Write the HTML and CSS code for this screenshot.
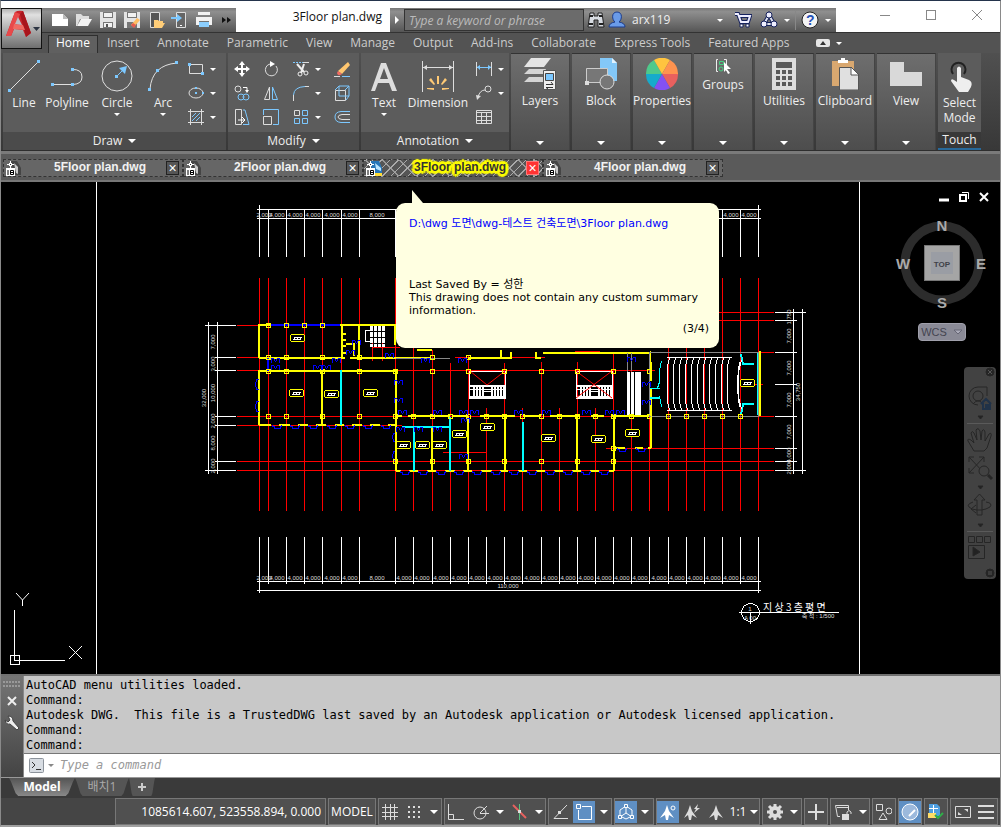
FILE: index.html
```html
<!DOCTYPE html>
<html lang="en">
<head>
<meta charset="utf-8">
<title>3Floor plan.dwg</title>
<link rel="stylesheet" href="styles.css">
</head>
<body>
<div class="app">
<header class="titlebar">
  <button class="app-button" aria-label="Application menu">
    <svg width="39" height="39" viewBox="0 0 39 39"><path d="M4 27L13 3Q16 1 21 2L29 24L24 28L21 21L12 20L9 27Z" fill="#c8242b"/><path d="M13 3L18 5L9 27L4 27Z" fill="#e8494a"/><path d="M18 5L21 2L29 24L24 28Z" fill="#a8151c"/><path d="M12 15L21 16L23 21L11 20Z" fill="#f06a62"/><path d="M16 8L20 16L13 15Z" fill="#b9bcc4"/><path d="M31 18H38L34.500 22Z" fill="#2c3442"/></svg>
  </button>
  <div class="qat">
    <button aria-label="New"><svg width="18" height="18"><path d="M1 3H12L17 8V15H1Z" fill="#fff"/><path d="M12 3V8H17Z" fill="#bbb"/></svg></button>
    <button aria-label="Open"><svg width="18" height="18"><path d="M1 3H6L8 5H14V8H5L2 15H1Z" fill="#ddd"/><path d="M6 8H17L13 15H2Z" fill="#f4f4f4"/></svg></button>
    <button aria-label="Save"><svg width="18" height="18"><path d="M1 1H17V17H1Z" fill="#e4e4e4"/><path d="M4 1H14V7H4ZM4 11H14V17H4Z" fill="#777"/><path d="M5 2H13V6H5ZM5 12H13V16H5Z" fill="#f2f2f2"/><path d="M7 13H9V16H7Z" fill="#555"/></svg></button>
    <button aria-label="Save As"><svg width="18" height="18"><path d="M1 1H17V17H1Z" fill="#e4e4e4"/><path d="M4 1H14V7H4ZM4 11H14V17H4Z" fill="#777"/><path d="M5 2H13V6H5Z" fill="#f2f2f2"/><path d="M8 14L14 7L17 9L11 16Z" fill="#ffbd63"/><path d="M8 14L10 12L13 14L11 17Z" fill="#e75a4d"/></svg></button>
    <button aria-label="Open from mobile"><svg width="18" height="18"><path d="M3.500 1.500H12.500V16.500H3.500Z" fill="#555" stroke="#ddd"/><path d="M7 9H11L12 10H16V12H18L15 17H7Z" fill="#ffcd78"/></svg></button>
    <button aria-label="Save to mobile"><svg width="18" height="18"><path d="M5.500 1.500H14.500V16.500H5.500Z" fill="#666" stroke="#ddd"/><path d="M0 6H6V3L11 7L6 11V8H0Z" fill="#7cc8ff"/><path d="M9 14.500H11" stroke="#fff"/></svg></button>
    <button aria-label="Plot"><svg width="18" height="18"><path d="M3 1H15V4H3ZM1 6H17V14H14V10H4V14H1Z" fill="#f2f2f2"/><path d="M4 11H14V16H4Z" fill="#8ccfff"/></svg></button>
    <button class="narrow" aria-label="More"><svg width="10" height="8"><path d="M1 1L5 4L1 7ZM6 1L10 4L6 7Z" fill="#111"/></svg></button>
  </div>
  <h1 class="doc-title">3Floor plan.dwg</h1>
  <div class="info">
    <button class="slot-14" aria-label="Collapse search"><svg width="6" height="8"><path d="M1 0L5 4L1 8Z" fill="#fff"/></svg></button>
    <input class="search" type="text" aria-label="Search" placeholder="Type a keyword or phrase">
    <button class="slot-24" aria-label="Search"><svg width="18" height="18"><path d="M3 2H7V5H11V2H15L17 16H11V9H7V16H1Z" fill="#d8dce2" stroke="#222"/><path d="M3 5H6M12 5H15M2 13H6M12 13H16" stroke="#222" stroke-width="2"/></svg></button>
    <button class="user"><svg width="18" height="18"><path d="M9 1C15 1 14 9 11 11Q17 12 17 16H1Q1 12 7 11C4 9 3 1 9 1Z" fill="#6a9be8" stroke="#1c3c8c"/></svg>arx119<i class="caret end"></i></button>
    <button class="slot-24" aria-label="Store"><svg width="18" height="18"><path d="M1 3H4L7 11H14L16 5H5" stroke="#16225c" stroke-width="4" fill="none"/><path d="M1 3H4L7 11H14L16 5H5" stroke="#eef" stroke-width="2" fill="none"/><path d="M6 13h3v3h-3zM12 13h3v3h-3z" fill="#fff" stroke="#16225c"/></svg></button>
    <button class="slot-40" aria-label="Autodesk app store"><svg width="18" height="18"><path d="M9 4L4 13H14Z" stroke="#16225c" stroke-width="4" fill="none"/><path d="M9 4L4 13H14Z" stroke="#dfe3ee" stroke-width="2" fill="none"/><g fill="#eef" stroke="#16225c"><circle cx="9" cy="4" r="3"/><circle cx="4" cy="13" r="3"/><circle cx="14" cy="13" r="3"/></g></svg><i class="caret"></i></button>
    <span class="rule"></span>
    <button class="slot-40" aria-label="Help"><svg width="18" height="18"><circle cx="9" cy="9" r="8" fill="#f4f4f4" stroke="#222"/><text class="question" x="5" y="14">?</text></svg><i class="caret"></i></button>
  </div>
  <div class="window-controls">
    <button aria-label="Minimize"><svg width="12" height="12"><path d="M1 6.500H11" stroke="#888"/></svg></button>
    <button aria-label="Maximize"><svg width="12" height="12"><rect x="1.500" y="1.500" width="9" height="9" fill="none" stroke="#888"/></svg></button>
    <button aria-label="Close"><svg width="12" height="12"><path d="M1 1L11 11M11 1L1 11" stroke="#888"/></svg></button>
  </div>
</header>

<nav class="menu">
  <button class="current">Home</button><button>Insert</button><button>Annotate</button><button>Parametric</button><button>View</button><button>Manage</button><button>Output</button><button>Add-ins</button><button>Collaborate</button><button>Express Tools</button><button>Featured Apps</button>
  <button class="minimize" aria-label="Minimize ribbon"><svg width="14" height="8"><rect width="14" height="8" rx="2" fill="#e6e6e6"/><path d="M4 6L7 2L10 6Z" fill="#333"/></svg><i class="caret"></i></button>
</nav>

<div class="ribbon">
  <section class="panel draw">
    <div class="tools">
      <button class="big"><svg width="32" height="32"><path d="M2 30L30 2" stroke="#e0e0e0"/><path d="M0 29h3v3h-3zM29 0h3v3h-3z" fill="#7cc8ff"/></svg>Line</button>
      <button class="big"><svg width="32" height="32"><path d="M1 24.500H21M21 9.500Q31 9 31 17Q31 24 22 24.500" stroke="#e0e0e0" fill="none"/><path d="M0 23h3v3h-3zM20 23h3v3h-3zM20 8h3v3h-3z" fill="#7cc8ff"/></svg>Polyline</button>
      <button class="big"><svg width="32" height="32"><circle cx="16" cy="16" r="15" stroke="#e0e0e0" fill="none"/><path d="M16 16L23 9" stroke="#7cc8ff"/><path d="M14 15h3v3h-3zM18 8L26 6L24 14Z" fill="#7cc8ff"/></svg>Circle<i class="caret"></i></button>
      <button class="big"><svg width="32" height="32"><path d="M3 29Q5 5 30 3" stroke="#e0e0e0" fill="none"/><path d="M1 28h3v3h-3zM9 9h3v3h-3zM28 1h3v3h-3z" fill="#7cc8ff"/></svg>Arc<i class="caret"></i></button>
      <div class="small-tools one">
        <button aria-label="Rectangle"><svg width="16" height="16"><path d="M1.500 3.500H14.500V12.500H1.500Z" stroke="#ddd" fill="none"/><path d="M0 2h3v3h-3zM13 11h3v3h-3z" fill="#7cc8ff"/></svg><i class="caret"></i></button>
        <button aria-label="Ellipse"><svg width="16" height="16"><ellipse cx="8" cy="8" rx="7" ry="5" stroke="#ddd" fill="none"/><path d="M7 7h2v2h-2zM7 2h2v2h-2zM14 7h2v2h-2z" fill="#7cc8ff"/></svg><i class="caret"></i></button>
        <button aria-label="Hatch"><svg width="16" height="16"><path d="M2.500 0V16M13.500 0V16M0 2.500H16M0 13.500H16" stroke="#ddd"/><path d="M4 8L8 4M4 12L12 4M8 12L12 8" stroke="#7cc8ff"/></svg><i class="caret"></i></button>
      </div>
    </div>
    <button class="caption">Draw <i class="caret wide"></i></button>
  </section>
  <section class="panel modify">
    <div class="small-tools four">
      <button aria-label="Move"><svg width="16" height="16"><path d="M8 2V14M2 8H14" stroke="#fff" stroke-width="2"/><path d="M8 0L11 4H5ZM8 16L11 12H5ZM0 8L4 5V11ZM16 8L12 5V11Z" fill="#fff"/></svg></button>
      <button aria-label="Rotate"><svg width="16" height="16"><path d="M13 5A6 6 0 1 1 7 3" stroke="#ddd" fill="none"/><path d="M7 0L12 3L7 6Z" fill="#fff"/></svg></button>
      <button aria-label="Trim"><svg width="16" height="16"><path d="M0 1.500H10" stroke="#7cc8ff" stroke-dasharray="2 1"/><path d="M10 1.500H16" stroke="#ddd"/><path d="M4 3L11 11M11 3L8 12" stroke="#eee" stroke-width="2"/><circle cx="7" cy="13" r="2" stroke="#eee" fill="none"/><circle cx="13" cy="12" r="2" stroke="#eee" fill="none"/></svg><i class="caret"></i></button>
      <button aria-label="Erase"><svg width="16" height="16"><path d="M4 10L14 1L16 4L8 13Z" fill="#ffc66f"/><path d="M4 10L8 13Q4 16 3 12Z" fill="#f36b63"/><path d="M0 15.500H6" stroke="#ddd"/><path d="M8 15.500H16" stroke="#7cc8ff"/></svg></button>
      <button aria-label="Copy"><svg width="16" height="16"><circle cx="4" cy="4" r="3" stroke="#ddd" fill="none"/><path d="M9 2.500H13V6" stroke="#fff" fill="none"/><path d="M11 5H15L13 8Z" fill="#fff"/><circle cx="7" cy="12" r="3" stroke="#7cc8ff" fill="none"/><circle cx="12" cy="12" r="3" stroke="#7cc8ff" fill="none"/></svg></button>
      <button aria-label="Mirror"><svg width="16" height="16"><path d="M6.500 2V14.500H1.500Z" stroke="#ddd" fill="none"/><path d="M9.500 2V14.500H14.500Z" stroke="#7cc8ff" fill="none"/></svg></button>
      <button aria-label="Fillet"><svg width="16" height="16"><path d="M.500 10V16M12 1.500H16" stroke="#ddd"/><path d="M.500 10Q1 2 12 1.500" stroke="#7cc8ff" fill="none"/></svg><i class="caret"></i></button>
      <button aria-label="Explode"><svg width="16" height="16"><path d="M1.500 5.500H11.500V15.500H1.500Z" stroke="#ddd" fill="none"/><path d="M1 5L5 1H15V11L12 15M11 5L15 1M5 1V11H15" stroke="#7cc8ff" fill="none"/></svg></button>
      <button aria-label="Stretch"><svg width="16" height="16"><path d="M1.500 .500H7.500V15.500H1.500Z" stroke="#ddd" fill="none"/><path d="M9 1H11L15 15.500H9" stroke="#7cc8ff" fill="none"/><path d="M4 11H11M8 8L11 11L8 14" stroke="#fff" fill="none"/></svg></button>
      <button aria-label="Scale"><svg width="16" height="16"><path d="M.500 6V.500H15.500V15.500H10" stroke="#7cc8ff" fill="none"/><path d="M.500 7.500H8.500V15.500H.500Z" stroke="#ddd" fill="none"/></svg></button>
      <button aria-label="Array"><svg width="16" height="16"><path d="M1.500 1.500h5v5h-5z" stroke="#ddd" fill="none"/><path d="M9.500 1.500h5v5h-5zM1.500 9.500h5v5h-5zM9.500 9.500h5v5h-5z" stroke="#7cc8ff" fill="none"/></svg><i class="caret"></i></button>
      <button aria-label="Offset"><svg width="16" height="16"><path d="M16 2.500H7Q1 3 1 8Q1 13 7 13.500H16" stroke="#7cc8ff" fill="none"/><path d="M16 5.500H8Q4 6 4 8Q4 10 8 10.500H16" stroke="#ddd" fill="none"/></svg></button>
    </div>
    <button class="caption">Modify <i class="caret wide"></i></button>
  </section>
  <section class="panel annotation">
    <div class="tools">
      <button class="big"><svg width="32" height="32"><path d="M3 31L13 3H18L29 31H24L21 23H10L7 31ZM12 19H20L16 8Z" fill="#ddd" fill-rule="evenodd"/></svg>Text<i class="caret"></i></button>
      <button class="big"><svg width="32" height="32"><path d="M.500 1V32M31.500 1V32M1 7.500H31" stroke="#ddd"/><path d="M1 7.500L5 5V10ZM31 7.500L27 5V10Z" fill="#ddd"/><path d="M15 16h2v8h-2zM7 20L9 18L13 24L12 25ZM25 20L23 18L19 24L20 25ZM5 28H12V30L5 29ZM27 28H20V30L27 29Z" fill="#ffca75"/></svg>Dimension</button>
      <div class="small-tools one">
        <button aria-label="Linear"><svg width="16" height="16"><path d="M.500 1V15M15.500 1V15" stroke="#ddd"/><path d="M1 6.500H15" stroke="#7cc8ff"/><path d="M1 6L4 4V9ZM15 6L12 4V9Z" fill="#7cc8ff"/></svg><i class="caret"></i></button>
        <button aria-label="Leader"><svg width="16" height="16"><circle cx="12" cy="4" r="3" stroke="#ddd" fill="none"/><path d="M9 5Q4 5 2 12" stroke="#ddd" fill="none"/><path d="M0 10L5 11L1 15Z" fill="#ddd"/></svg><i class="caret"></i></button>
        <button aria-label="Table"><svg width="16" height="16"><path d="M.500 1.500H15.500V14.500H.500ZM0 3.500H16M0 7.500H16M0 11.500H16M5.500 3V15M10.500 3V15" stroke="#ddd" fill="none"/></svg></button>
      </div>
    </div>
    <button class="caption">Annotation <i class="caret wide"></i></button>
  </section>
  <button class="folded"><svg width="32" height="32"><path d="M7 0H27L20 9H0Z" fill="#e4e4e4"/><path d="M5 11H22L20 16H0ZM5 19H19V24H0Z" fill="#d4d4d4"/><path d="M19.500 12.500H31.500V31.500H19.500Z" fill="#eee" stroke="#555"/><path d="M21.500 15.500H29.500V22.500H21.500Z" fill="#7cc8ff" stroke="#444"/><path d="M22 26.500H29M22 29.500H29M27 24L29 26.500M24 31L22 29.500" stroke="#333"/></svg>Layers<i class="caret wide"></i></button>
  <button class="folded"><svg width="32" height="32"><path d="M15 0H27L32 5V23H15Z" fill="#83c8f8"/><path d="M27 0V5H32Z" fill="#e2f3ff"/><path d="M1.500 10.500H22.500V24.500H1.500Z" fill="#777" stroke="#ccc"/><path d="M0 23h4v4h-4z" fill="#ddd"/><circle cx="22" cy="24" r="7" fill="#777" stroke="#ddd"/></svg>Block<i class="caret wide"></i></button>
  <button class="folded"><svg width="32" height="32"><path d="M16 16L0 16A16 16 0 0 1 8 2Z" fill="#4fc98b"/><path d="M16 16L8 2A16 16 0 0 1 24 2Z" fill="#ffc43f"/><path d="M16 16L24 2A16 16 0 0 1 32 16Z" fill="#ff934f"/><path d="M16 16H32A16 16 0 0 1 24 30Z" fill="#e9605e"/><path d="M16 16L24 30A16 16 0 0 1 8 30Z" fill="#8351f2"/><path d="M16 16L8 30A16 16 0 0 1 0 16Z" fill="#16abcc"/></svg>Properties<i class="caret wide"></i></button>
  <button class="folded"><svg width="16" height="16"><path d="M3 1.500H1.500V13.500H3M9 1.500H11.500V13" stroke="#eee" fill="none"/><path d="M4.500 3.500h4v3h-4z" stroke="#47ce82" fill="none"/><circle cx="6" cy="11" r="2" stroke="#47ce82" fill="none"/><path d="M9 4L16 11L12 11L15 15L13 16L11 12L9 14Z" fill="#fff"/></svg>Groups<i class="caret wide"></i></button>
  <button class="folded"><svg width="32" height="32"><path d="M4 0H28V32H4Z" fill="#ddd"/><path d="M8 4H24V10H8ZM8 12h4v4h-4zM14 12h4v4h-4zM20 12h4v4h-4zM8 18h4v4h-4zM14 18h4v4h-4zM20 18h4v4h-4zM8 24h4v4h-4zM14 24h4v4h-4zM20 24h4v4h-4z" fill="#595959"/></svg>Utilities<i class="caret wide"></i></button>
  <button class="folded"><svg width="32" height="32"><path d="M3 3H25V28H3Z" fill="#d9a870"/><path d="M9 2H12V0H16V2H19V5H9Z" fill="#fff"/><path d="M10.500 9.500H22L29.500 17V32H10.500Z" fill="#e0e0e0" stroke="#555"/><path d="M22 9V17H30Z" fill="#fff" stroke="#555"/></svg>Clipboard<i class="caret wide"></i></button>
  <button class="folded"><svg width="32" height="32"><path d="M0 4H14V14H32V28H0Z" fill="#d9d9d9"/></svg>View<i class="caret wide"></i></button>
  <section class="panel touch">
    <button class="big"><svg width="32" height="32"><path d="M9 14A7 7 0 1 1 20 14" stroke="#222" stroke-width="2" fill="none"/><path d="M13 8Q15 5 17 8V17L25 20Q29 22 27 27L24 32H15Q12 28 7 21Q7 18 10 20L13 22Z" fill="#eee"/></svg>Select<br>Mode</button>
    <button class="caption">Touch</button>
  </section>
</div>

<div class="file-tabs">
  <div class="file-tab"><svg width="16" height="16"><use href="#dwg"/></svg><a href="#plan">5Floor plan.dwg</a><button aria-label="Close 5Floor plan.dwg">×</button></div>
  <div class="file-tab"><svg width="16" height="16"><use href="#dwg"/></svg><a href="#plan">2Floor plan.dwg</a><button aria-label="Close 2Floor plan.dwg">×</button></div>
  <div class="file-tab active"><svg width="16" height="16"><path d="M4 1H13L16 8V15H7Z" fill="#2776b8"/><path d="M9 3L15 8V11L10 9Z" fill="#b9e5ff"/><path d="M8 14.500H16" stroke="#ffdb35" stroke-width="3"/><use href="#badge"/></svg><a href="#plan">3Floor plan.dwg</a><button aria-label="Close 3Floor plan.dwg">×</button></div>
  <div class="file-tab"><svg width="16" height="16"><use href="#dwg"/></svg><a href="#plan">4Floor plan.dwg</a><button aria-label="Close 4Floor plan.dwg">×</button></div>
</div>

<main class="canvas" id="plan">
<svg class="drawing" role="img" aria-label="Floor plan">
<defs>
  <g id="badge"><path d="M4.500 1V8M1 4.500H8" stroke="#fff"/><rect x="3" y="3" width="3" height="3" fill="#fff"/><rect x="4" y="4" width="1" height="1" fill="#222"/><rect x="0" y="8" width="9" height="8" fill="#fff"/><path d="M2 10V15M4.500 10.500h3v4h-3zM4 12.500h4" stroke="#000" fill="none"/></g>
  <g id="dwg"><path d="M5 1H11L15 8V15H8Z" fill="#444"/><path d="M8 3L12 7V14L10 13Z" fill="#c8c8c8"/><use href="#badge"/></g>
  <marker id="col" class="glyph" markerUnits="userSpaceOnUse" markerWidth="6" markerHeight="6"><rect x="-1.500" y="-1.500" width="4" height="4" fill="none" stroke="#ff0"/></marker>
  <marker id="win" class="glyph" markerUnits="userSpaceOnUse" markerWidth="12" markerHeight="6"><path d="M-4.500 0V1.500H-3V3.500H3V1.500H4.500V0" fill="none" stroke="#00f"/></marker>
  <marker id="door" class="glyph" markerUnits="userSpaceOnUse" markerWidth="10" markerHeight="6"><path d="M-3.500 3V-1.500H-1.500L.500 1.500L2.500 -1.500H4.500V3" fill="none" stroke="#00f"/></marker>
  <marker id="tag" class="glyph" markerUnits="userSpaceOnUse" markerWidth="16" markerHeight="10"><rect x="-6.500" y="-3.500" width="14" height="7" rx="2" fill="#000" stroke="#ff0"/><path d="M-3 -.500H5M-4 1.500H4M-2.500 -1V2M.500 -1V2M3.500 -1V2" stroke="#fff" fill="none"/></marker>
  <g id="stair"><rect x=".500" y=".500" width="36" height="27" fill="none" stroke="#fff"/><path d="M0 14.500H37M0 25.500H37" stroke="#fff" stroke-width="2"/><path d="M4 20H15M22 20H36" stroke="#fff" stroke-width="11" stroke-dasharray="2 1"/><path d="M15 20H22M1 18.500H36" stroke="#fff"/></g>
  <path id="axes" d="M259.500 0V47M268.500 0V47M286.500 0V47M304.500 0V47M322.500 0V47M341.500 0V47M359.500 0V47M395.500 0V47M413.500 0V47M432.500 0V47M450.500 0V47M468.500 0V47M486.500 0V47M504.500 0V47M522.500 0V47M541.500 0V47M559.500 0V47M577.500 0V47M595.500 0V47M613.500 0V47M631.500 0V47M649.500 0V47M668.500 0V47M686.500 0V47M704.500 0V47M722.500 0V47M740.500 0V47M758.500 0V47"/>
</defs>
<g transform="translate(-1 -182)">
  <g class="white"><path d="M96.500 182V674M859.500 182V674"/>
    <path d="M257 209.500H761M257 218.500H761M257 581.500H761M257 590.500H761M259.500 205V222M758.500 205V222M259.500 577V593M758.500 577V593"/>
    <use href="#axes" y="210"/><use href="#axes" y="537"/>
    <path d="M208.500 322V474M217.500 322V474M205 325.500H236M215 357.500H236M215 370.500H236M215 416.500H236M215 425.500H236M215 461.500H236M205 470.500H236"/>
    <path d="M793.500 309V474M802.500 309V474M775 312.500H806M775 320.500H797M775 352.500H797M775 384.500H797M775 416.500H797M775 448.500H797M775 461.500H797M775 470.500H806"/>
  </g>
  <g class="red">
    <path d="M259.500 278V511M268.500 278V511M286.500 278V511M304.500 278V511M322.500 278V511M341.500 278V511M359.500 278V511M395.500 278V511M413.500 278V511M432.500 350V511M450.500 363V511M468.500 355V511M486.500 408V511M504.500 363V511M522.500 408V511M541.500 362V511M559.500 408V511M577.500 362V511M595.500 408V511M613.500 352V511M631.500 370V511M649.500 352V511M668.500 278V511M686.500 278V511M704.500 278V511M722.500 278V511M740.500 278V511M758.500 278V511"/>
    <path d="M237 325.500H259M237 357.500H270M372 347.500H400M237 370.500H655M237 416.500H774M237 425.500H402M237 461.500H774M237 470.500H774M606 448.500H774M700 312.500H774M700 320.500H774M650 352.500H774M740 384.500H763M443 452.500H487M455 357.500H545M372.500 343V361M382.500 343V361M575 351.500H600"/>
  </g>
  <g class="yellow">
    <path d="M259 358V325H396M259 358H345M350 358H396M342 325V358M359 325V357M342 334H346M342 340H346M342 346H346M342 353H346M346 344H354V356M395 325V345M259 425V371H396V416M322 371V425M259 425H271M279 425H290M298 425H308M316 425H326M335 425H344M352 425H362M370 425H380M388 425H396"/>
    <path d="M396 358H430M468 358H511V352M417 350H432M501 350V358M536 352V358H541M543 353H650V362M650 352H651M396 416H402M408 416H450M453 416H468M480 416H515M523 416H541M550 416H579M591 416H604M611 416H650M396 416V471M432 428V471M468 416V471M505 416V471M577 416V471M614 416V471M651 416V448M614 448H625M635 448H643M648 448H651M396 471H401M409 471H418M427 471H436M445 471H455M463 471H472M481 471H492M500 471H508M518 471H527M536 471H545M554 471H563M572 471H581M590 471H599M609 471H614M760 351V416M651 381V362M651 388V416"/>
  </g>
  <g class="blue"><path d="M270 325H340M268 358V371" stroke-width="2"/><path d="M259 379.500H256.500L255.500 384L256.500 389.500H259M259 401.500H256.500L255.500 406L256.500 411.500H259M651 352.500H758M395 433.500H393.500L392.500 437L393.500 441.500H395M395 451.500H393.500L392.500 456L393.500 460.500H395"/></g>
  <g class="gray"><path d="M396 358.500H450M649.500 352.500H758.500V416.500H649.500ZM627 353V372M631.500 353V371"/></g>
  <g class="cyan"><path d="M341 370V425M402 427H451M414 427V471M450 417V471M523 422V471M650 398H660M741 354L743 364H754M741 415L743 404H754"/><path d="M650 388.500H660M661.500 361L659.500 370V382L657.500 388M659.500 396L661.500 407M757.500 353V415" stroke-width="1"/></g>
  <use href="#stair" x="469" y="371"/><use href="#stair" x="576" y="371"/>
  <path class="diag" d="M470 371L487 385L505 371M576 371L612 398M612 371L576 398"/>
  <path class="white stripe" d="M628.500 372V415M632.500 372V415M636.500 372V415M639.500 372V415"/>
  <path class="white flight" d="M371.500 326V347M375.500 326V347M379.500 326V347M383.500 326V347"/>
  <path class="white" d="M370 330.500H365.500V341.500H370"/>
  <g class="white"><path d="M667 357.500H732M667 410.500H732"/><path d="M669.500 358L667.500 366V402L669.500 410M675.500 358L673.500 366V402L675.500 410M681.500 358L679.500 366V402L681.500 410M687.500 358L685.500 366V402L687.500 410M693.500 358L691.500 366V402L693.500 410M699.500 358L697.500 366V402L699.500 410M705.500 358L703.500 366V402L705.500 410M711.500 358L709.500 366V402L711.500 410M717.500 358L715.500 366V402L717.500 410M723.500 358L721.500 366V402L723.500 410M729.500 358L727.500 366V402L729.500 410M741.500 360L738.500 372V397L741.500 409M739.500 362L737.500 380V389L739.500 407"/></g>
  <path class="cols" d="M268 325L286 325L304 325L322 325L268 357L286 357L322 357L359 357L268 371L286 371L322 371L359 371L395 371L268 416L286 416L322 416L359 416L395 416L432 357L468 357L432 371L468 371L504 371L541 371L577 371L613 371L649 371L413 416L432 416L450 416L468 416L486 416L504 416L522 416L541 416L559 416L577 416L595 416L613 416L631 416L649 416L395 461L432 461L468 461L504 461L541 461L577 461L613 461L613 448L668 416L686 416L704 416L722 416L740 416"/>
  <path class="wins" d="M277 425L295 425L313 425L332 425L350 425L368 425L386 425L405 471L423 471L441 471L459 471L477 471L496 471L514 471L532 471L550 471L568 471L586 471L604 471L622 448L641 448"/>
  <path class="doors" d="M275 360L275 367L336 360L317 367L326 367L356 342L350 352L389 355L402 412L437 412L463 412L474 412L518 412L546 412L586 412L609 412L620 412L425 360L462 360L398 382L398 400L646 384L646 402L631 359L465 420L463 456L400 429L418 429L437 429"/>
  <path class="tags" d="M297 338L296 393L331 394L370 393L487 427L459 434L403 445L422 445L439 445L548 438L598 439L632 433L747 383"/>
  <g class="dims">
    <text y="217"><tspan x="264">2,000</tspan><tspan x="277">4,000</tspan><tspan x="295">4,000</tspan><tspan x="313">4,000</tspan><tspan x="332">4,000</tspan><tspan x="350">4,000</tspan><tspan x="377">8,000</tspan><tspan x="731">4,000</tspan><tspan x="749">4,000</tspan></text>
    <text y="580"><tspan x="264">2,000</tspan><tspan x="277">4,000</tspan><tspan x="295">4,000</tspan><tspan x="313">4,000</tspan><tspan x="332">4,000</tspan><tspan x="350">4,000</tspan><tspan x="377">8,000</tspan><tspan x="404">4,000</tspan><tspan x="422">4,000</tspan><tspan x="441">4,000</tspan><tspan x="459">4,000</tspan><tspan x="477">4,000</tspan><tspan x="495">4,000</tspan><tspan x="513">4,000</tspan><tspan x="532">4,000</tspan><tspan x="550">4,000</tspan><tspan x="568">4,000</tspan><tspan x="586">4,000</tspan><tspan x="604">4,000</tspan><tspan x="622">4,000</tspan><tspan x="640">4,000</tspan><tspan x="659">4,000</tspan><tspan x="677">4,000</tspan><tspan x="695">4,000</tspan><tspan x="713">4,000</tspan><tspan x="731">4,000</tspan><tspan x="749">4,000</tspan></text>
    <text x="508" y="588">110,000</text>
    <g transform="rotate(-90)"><text y="215"><tspan x="-342">7,000</tspan><tspan x="-364">3,000</tspan><tspan x="-393">10,000</tspan><tspan x="-421">2,000</tspan><tspan x="-443">8,000</tspan><tspan x="-466">2,000</tspan></text><text x="-398" y="206">32,000</text>
    <text y="791"><tspan x="-317">1,750</tspan><tspan x="-336">7,000</tspan><tspan x="-368">7,000</tspan><tspan x="-400">7,000</tspan><tspan x="-432">7,000</tspan><tspan x="-455">4,000</tspan><tspan x="-467">2,000</tspan></text><text x="-392" y="800">34,750</text></g>
    <text x="750" y="611">1</text><text x="750" y="620">A 00</text><text x="818" y="618">축 척 : 1/500</text>
  </g>
  <g class="white"><circle cx="750.500" cy="612.500" r="9" fill="none"/><path d="M739 612.500H839M750.500 612V624"/></g>
  <text class="plan-name" x="763" y="611">지 상 3 층 평 면</text>
  <g class="white"><path d="M14.500 610V655M20 660.500H65M10.500 655.500H19.500V664.500H10.500ZM14.500 655V660.500H20"/><path class="smooth" d="M16 593L22.500 600L29 593M22.500 600V606M69 646L82 659M82 646L69 659"/></g>
</g>
</svg>

<div class="hint" role="tooltip">
  <p class="path">D:\dwg 도면\dwg-테스트 건축도면\3Floor plan.dwg</p>
  <p>Last Saved By = 성한<br>This drawing does not contain any custom summary information.</p>
  <p class="count">(3/4)</p>
</div>

<div class="doc-controls">
  <button aria-label="Minimize drawing"><svg width="12" height="12"><path d="M1 9H11" stroke="#fff" stroke-width="3"/></svg></button>
  <button aria-label="Restore drawing"><svg width="12" height="12"><path d="M2 4H8V10H2Z" stroke="#fff" stroke-width="2" fill="none"/><path d="M4 1.500H10.500V8" stroke="#fff" fill="none"/></svg></button>
  <button aria-label="Close drawing"><svg width="12" height="12"><path d="M2 2L10 10M10 2L2 10" stroke="#fff" stroke-width="2"/></svg></button>
</div>
<div class="cube">
  <svg width="94" height="94"><circle cx="47" cy="46" r="37" stroke="#2c2c2c" stroke-width="9" fill="none"/><rect x="29.500" y="28.500" width="35" height="35" fill="#a5a5a5" stroke="#777"/><rect x="36" y="35" width="22" height="22" fill="#9a9da4"/><text class="top" x="47" y="50">TOP</text><text x="47" y="14">N</text><text x="47" y="91">S</text><text x="8" y="52">W</text><text x="86" y="52">E</text></svg>
  <button class="wcs">WCS<svg width="10" height="6"><path d="M1 1H9L5 5Z" fill="#aaaab8" stroke="#666675"/></svg></button>
</div>
<div class="navbar">
  <svg width="32" height="212" fill="none" stroke="#262626"><circle cx="26" cy="5" r="4" fill="#252525"/><path d="M24 3L28 7M28 3L24 7" stroke="#555"/><path d="M14 38A9 9 0 1 1 14 20H23V29"/><circle cx="14" cy="29" r="5"/><path d="M9 37Q14 31 18 36"/><path d="M17 37L22 32L27 37M19 36V42H26V36M22 42V38H24V42" stroke="#203248" stroke-width="2"/><path d="M14 49H19L16.500 52Z" fill="#222"/><path d="M3 56.500H29" stroke="#5a5a5a"/><path d="M10 84L4 74Q3 71 7 73L10 76L7 66Q8 63 10 66L13 73L12 63Q14 60 16 64L17 73L18 64Q20 61 21 65V74L25 67Q28 65 27 69L23 81L20 84Z"/><path d="M5 90L21 107M20 90L5 106M5 95V90H10M15 90H20V95M5 101V106H10"/><circle cx="20" cy="104" r="5" fill="#424242"/><path d="M24 108L28 112" stroke-width="3"/><path d="M14 119H19L16.500 122Z" fill="#222"/><path d="M13 148V133H10L15.500 127L21 133H18V148ZM9 135Q0 138 8 142Q18 145 26 140Q29 136 22 135M12 138L7 142L12 146"/><path d="M14 157H19L16.500 160Z" fill="#222"/><path d="M3 164.500H29" stroke="#5a5a5a"/><path d="M4.500 169.500h6v6h-6zM12.500 169.500h6v6h-6zM20.500 169.500h6v6h-6zM4.500 178.500h16v13h-16z"/><path d="M9 180V189L16 185Z" fill="#222"/><circle cx="26" cy="206" r="4" fill="#252525"/><path d="M24 205H28M24 207H28" stroke="#555"/></svg>
</div>
</main>

<section class="command">
  <div class="grip">
    <svg width="18" height="6"><path d="M0 1H18M0 5H18" stroke="#999" stroke-width="2" stroke-dasharray="2 1"/></svg>
    <button aria-label="Close command line"><svg width="12" height="12"><path d="M2 2L10 10M10 2L2 10" stroke="#eee" stroke-width="2"/></svg></button>
    <button aria-label="Customize"><svg width="16" height="16"><path d="M1 5L4 7L6 5L4 1Q9 1 9 6L15 13L13 15L6 9Q2 10 1 5Z" fill="#eee" stroke="#444"/></svg></button>
  </div>
  <div class="console">
    <pre class="history">AutoCAD menu utilities loaded.
Command:
Autodesk DWG.  This file is a TrustedDWG last saved by an Autodesk application or Autodesk licensed application.
Command:
Command:</pre>
    <label class="prompt"><svg width="15" height="15"><rect x=".500" y=".500" width="14" height="14" rx="1" fill="#d8dde3" stroke="#8c939b"/><path d="M3 4L6 7L3 10M7 11.500H12" stroke="#333" fill="none"/></svg><i class="caret dim"></i><input type="text" aria-label="Command" placeholder="Type a command"></label>
  </div>
</section>

<nav class="layouts">
  <button class="model">Model</button><button class="layout">배치1</button><button class="add" aria-label="New layout"><svg width="10" height="10"><path d="M5 1V9M1 5H9" stroke="#ccc" stroke-width="2"/></svg></button>
</nav>

<footer class="status">
  <div class="cell coords">1085614.607, 523558.894, 0.000</div>
  <div class="cell"><button class="mode">MODEL</button></div>
  <div class="cell">
    <button class="w22" aria-label="Grid"><svg width="16" height="16"><path d="M3.500 0V16M8.500 0V16M12.500 0V16M0 3.500H16M0 8.500H16M0 12.500H16" stroke="#ddd"/></svg></button>
    <button class="w26" aria-label="Snap mode"><svg width="14" height="14"><path d="M1 2H14M1 7H14M1 12H14" stroke="#ddd" stroke-width="2" stroke-dasharray="2 3"/></svg></button>
    <button class="w14" aria-label="Snap options"><i class="caret wide"></i></button>
  </div>
  <div class="cell">
    <button class="w22" aria-label="Ortho"><svg width="16" height="16"><path d="M.500 0V15.500H16M.500 10.500H5.500V15" stroke="#ddd" fill="none"/></svg></button>
    <button class="w28" aria-label="Polar tracking"><svg width="16" height="16"><circle cx="7" cy="9" r="6" stroke="#ddd" fill="none"/><path d="M7 9.500H16M7 9L14 2" stroke="#ddd"/></svg></button>
    <button class="w10" aria-label="Polar options"><i class="caret wide"></i></button>
    <button class="w28" aria-label="Isometric drafting"><svg width="16" height="16"><path d="M8.500 0V16" stroke="#58c27d"/><path d="M2 1L15 14" stroke="#e7615f" stroke-width="2"/><rect x="7" y="6" width="3" height="3" fill="#ddd"/></svg></button>
    <button class="w12" aria-label="Isometric options"><i class="caret wide"></i></button>
  </div>
  <div class="cell">
    <button class="w22" aria-label="Object tracking"><svg width="16" height="16"><path d="M15 1L2 14.500H16" stroke="#ddd" fill="none"/><rect x="6" y="7" width="3" height="3" fill="#ddd"/></svg></button>
    <button class="w26" aria-label="Object snap"><span class="on"><svg width="16" height="16"><path d="M6 2.500H15.500V15.500H2.500V6M.500 .500h4v4h-4z" stroke="#fff" fill="none"/></svg></span></button>
    <button class="w14" aria-label="Object snap options"><i class="caret wide"></i></button>
  </div>
  <div class="cell">
    <button class="w22" aria-label="3D object snap"><span class="on"><svg width="16" height="16"><path d="M8 2L14 6V12L8 15L2 12V6ZM8 2V9L2 13M8 9L14 13" stroke="#fff" fill="none"/><path d="M6.500 .500h3v3h-3zM.500 11.500h3v3h-3zM12.500 11.500h3v3h-3z" stroke="#fff" fill="#5f8fc3"/></svg></span></button>
    <button class="w16" aria-label="3D snap options"><i class="caret wide"></i></button>
  </div>
  <div class="cell">
    <button class="w22" aria-label="Annotation visibility"><span class="on"><svg width="16" height="16"><path d="M7 1L9 7L14 14L9 11L8 16H6L5 11L0 14L5 7Z" fill="#fff"/><circle cx="13" cy="4" r="2" stroke="#fff" fill="none"/></svg></span></button>
    <button class="w26" aria-label="Auto scale"><svg width="16" height="16"><path d="M6 1L8 7L13 14L8 11L7 16H5L4 11L0 14L4 7ZM14 0L10 5H12L10 9L16 4H13Z" fill="#ddd"/></svg></button>
    <button class="w22" aria-label="Annotation scale"><svg width="16" height="16"><path d="M8 1L10 7L15 14L10 11L9 16H7L6 11L1 14L6 7Z" fill="#ddd"/></svg></button>
    <button class="w22">1:1</button>
    <button class="w10" aria-label="Scale list"><i class="caret wide"></i></button>
  </div>
  <div class="cell">
    <button class="w24" aria-label="Workspace"><svg width="16" height="16"><circle cx="8" cy="8" r="4" stroke="#ddd" stroke-width="4" fill="none"/><path d="M8 0V3M8 13V16M0 8H3M13 8H16M2 2L5 5M11 11L14 14M14 2L11 5M5 11L2 14" stroke="#ddd" stroke-width="3"/></svg></button>
    <button class="w14" aria-label="Workspace list"><i class="caret wide"></i></button>
  </div>
  <div class="cell"><button class="w22" aria-label="Annotation monitor"><svg width="16" height="16"><path d="M8 0V16M0 8H16" stroke="#ddd" stroke-width="2"/></svg></button></div>
  <div class="cell">
    <button class="w26" aria-label="Lock UI"><svg width="18" height="16"><path d="M5 12.500H2.500L.500 1.500H13.500V6" stroke="#ddd" fill="none"/><path d="M2 3.500H13" stroke="#ddd"/><path d="M7 10H14V16H7Z" fill="#ddd"/><path d="M12 10V8Q14 5 16 8V10" stroke="#ddd" fill="none"/></svg></button>
    <button class="w12" aria-label="Lock options"><i class="caret wide"></i></button>
  </div>
  <div class="cell"><button class="w22" aria-label="Isolate objects"><svg width="16" height="16"><path d="M.500 .500h6v6h-6zM7 9L11 15.500H3Z" stroke="#ddd" fill="none"/><circle cx="13" cy="7" r="3" stroke="#ddd" fill="none"/></svg></button></div>
  <div class="cell"><button class="w22" aria-label="Hardware acceleration"><span class="on"><svg width="18" height="18"><circle cx="9" cy="9" r="8" stroke="#fff" fill="#9cb9dc"/><path d="M8 13L14 7" stroke="#fff" stroke-width="2"/></svg></span></button></div>
  <div class="cell"><button class="w22" aria-label="Trusted drawing"><svg width="16" height="16"><path d="M1 0H9L12 3V12H1Z" fill="#4f9fe0"/><path d="M5.500 1V9M1 4.500H10" stroke="#fff"/><path d="M0 9H8V14H0Z" fill="#ffdc68"/><path d="M7 11L10 14L15 9" stroke="#2fae49" stroke-width="2" fill="none"/></svg></button></div>
  <div class="cell">
    <button class="w24" aria-label="Clean screen"><svg width="16" height="12"><path d="M.500 .500H15.500V11.500H.500Z" stroke="#ddd" fill="none"/><path d="M9 3H13V6ZM3 6V9H7Z" fill="#ddd"/></svg></button>
    <button class="w22" aria-label="Customization"><svg width="16" height="14"><path d="M0 1H16M0 7H16M0 13H16" stroke="#ddd" stroke-width="2"/></svg></button>
  </div>
</footer>
</div>
</body>
</html>
```
FILE: styles.css
```css
* { box-sizing: border-box; }
body { margin: 0; font: 12px/16px "Open Sans", "Noto Sans CJK KR", sans-serif; color: #eee; background: #3a3a3a; }
button { font: inherit; color: inherit; background: none; border: 0; padding: 0; margin: 0; display: flex; align-items: center; justify-content: center; white-space: nowrap; }
input { font: inherit; border: 0; padding: 0; min-width: 0; }
svg { display: block; flex: none; }
.app { min-height: 100vh; display: flex; flex-direction: column; border: 1px solid #8a8a8a; border-top-color: #24344c; border-bottom: 2px solid #a0a0a0; }
.caret { flex: none; width: 0; height: 0; border: 3px solid transparent; border-top-color: #fff; border-bottom: 0; }
.caret.wide { border-width: 4px; border-bottom: 0; }
.caret.dim { border-top-color: #888; }

.titlebar { position: relative; display: flex; align-items: flex-end; height: 31px; padding-left: 41px; background: #fff; }
.app-button { position: absolute; z-index: 2; left: 0; top: 7px; width: 41px; height: 41px; border: 1px solid #111; background: linear-gradient(#b5b5b5, #e0e0e0 15%, #6f6f6f); }
.qat, .info { display: flex; align-items: center; height: 24px; background: linear-gradient(#777, #8f8f8f 15%, #555); }
.qat { padding: 0 0 0 6px; }
.qat button { width: 24px; height: 24px; }
.qat .narrow { width: 20px; }
.doc-title { width: 154px; margin: 0; padding: 0 8px 7px 0; font-size: 12px; line-height: 16px; font-weight: 400; color: #111; text-align: right; }
.info { width: 446px; }
.slot-14 { width: 14px; }
.slot-24 { width: 24px; }
.slot-40 { width: 40px; gap: 6px; }
.search { width: 180px; height: 22px; padding: 0 4px; border: 1px solid #333; background: #6b6b6b; font-style: italic; }
.search::placeholder { color: #bbb; opacity: 1; }
.user { flex: 1; justify-content: flex-start; gap: 6px; }
.caret.end { margin: 0 8px 0 auto; }
.rule { width: 1px; height: 20px; background: #888; }
.question { font: bold 14px "Liberation Sans", sans-serif; fill: #2450b8; }
.window-controls { display: flex; align-self: flex-start; margin-left: auto; }
.window-controls button { width: 46px; height: 28px; }

.menu { display: flex; height: 21px; padding-left: 47px; background: #535353; border-top: 1px solid #333; color: #ccc; }
.menu button { padding: 0 9px; }
.menu .current { margin-top: 2px; padding: 0 7px 3px; background: #606060; border: 1px solid #2e2e2e; border-bottom: 0; color: #fff; }
.menu .minimize { gap: 6px; margin-left: 8px; }

.ribbon { display: flex; gap: 2px; height: 98px; padding: 0 2px; background: linear-gradient(#505050, #383838); border-bottom: 1px solid #2e2e2e; }
.panel { display: flex; flex-direction: column; background: #5c5c5c; }
.draw { width: 223px; }
.modify { width: 131px; }
.annotation { width: 148px; }
.touch { width: 43px; }
.tools { display: grid; flex: 1; align-items: start; }
.draw .tools { grid-template-columns: 42px 44px 56px 36px 1fr; }
.annotation .tools { grid-template-columns: 46px 62px 1fr; }
.big { flex-direction: column; padding-top: 7px; }
.big svg { margin-bottom: 3px; }
.big .caret { margin-top: 2px; }
.small-tools { display: grid; grid-auto-rows: 24px; flex: 1; padding-top: 4px; }
.small-tools button { gap: 6px; }
.one { justify-items: start; padding-left: 7px; }
.four { grid-template-columns: 27px 32px 39px 32px; }
.caption { height: 18px; margin-top: auto; gap: 6px; background: #4b4b4b; }
.touch .big { line-height: 15px; }
.touch .caption { background: #383838; border-bottom: 2px solid #28699a; }
.folded { width: 59px; flex-direction: column; justify-content: flex-start; padding: 4px 0 5px; gap: 3px; background: linear-gradient(#6e6e6e, #4d4d4d); border-top: 1px solid #333; border-right: 1px solid #444; }
.folded .caret { margin-top: auto; }

.file-tabs { display: flex; height: 31px; padding: 5px 2px 3px; background: #5a5a5a; border-top: 3px solid #7a7a7a; border-bottom: 2px solid #777; }
.file-tab { display: flex; align-items: center; width: 180px; padding: 0 3px 0 2px; background: #666; border: 1px dashed #333; }
.file-tab a { flex: 1; padding: 0 0 3px 12px; text-align: center; color: #f2f2f2; font: bold 12px/16px "Liberation Sans", sans-serif; text-decoration: none; }
.file-tab button { width: 13px; height: 14px; border: 1px solid #222; background: #555; color: #fff; font: 14px/12px "Liberation Sans", sans-serif; }
.file-tab.active { background: repeating-linear-gradient(135deg, #aaa 0 1px, transparent 1px 6px), repeating-linear-gradient(45deg, #999 0 1px, transparent 1px 12px), #555; }
.active a { color: #333; text-shadow: 2px 0 1px #ff0, -2px 0 1px #ff0, 0 2px 1px #ff0, 0 -2px 1px #ff0, 2px 2px 1px #ff0, -2px -2px 1px #ff0, 2px -2px 1px #ff0, -2px 2px 1px #ff0, 3px 0 1px #ff0, -3px 0 1px #ff0, 0 3px 1px #ff0, 0 -3px 1px #ff0; }
.file-tab.active button { background: #f33; border-color: #f77; }

.canvas { position: relative; flex: 1; min-height: 300px; background: #000; overflow: hidden; }
.drawing { position: absolute; inset: 0; width: 100%; height: 100%; shape-rendering: crispEdges; }
.glyph { overflow: visible; }
.white { stroke: #fff; fill: none; }
.stripe { stroke-width: 3px; }
.flight { stroke-width: 3px; stroke-dasharray: 5 1; }
.red { stroke: #f00; fill: none; }
.yellow { stroke: #ff0; stroke-width: 2px; fill: none; }
.blue { stroke: #00f; fill: none; }
.gray { stroke: #888; fill: none; }
.cyan { stroke: #0ff; stroke-width: 2px; fill: none; }
.diag { stroke: #f00; fill: none; shape-rendering: auto; }
.cols, .wins, .doors, .tags { fill: none; stroke: none; }
.cols { marker: url(#col); }
.wins { marker: url(#win); }
.doors { marker: url(#door); }
.tags { marker: url(#tag); }
.smooth { shape-rendering: auto; }
.dims { font: 6px "Liberation Sans", "Noto Sans CJK KR", sans-serif; fill: #ddd; text-anchor: middle; }
.plan-name { font: 10px "Noto Sans CJK KR", sans-serif; fill: #fff; }

.hint { position: absolute; left: 395px; top: 21px; width: 323px; padding: 14px 10px 13px 13px; border-radius: 9px; background: #ffffe1; color: #000; font: 11px/13px "DejaVu Sans", "Noto Sans CJK KR", sans-serif; }
.hint::before { content: ""; position: absolute; left: 16px; top: -13px; border-left: 11px solid #ffffe1; border-top: 13px solid transparent; }
.hint p { margin: 0; }
.hint .path { margin-bottom: 48px; color: #00f; white-space: nowrap; }
.hint .count { margin-top: 5px; text-align: right; }
.doc-controls { position: absolute; right: 10px; top: 9px; display: flex; gap: 8px; }
.cube { position: absolute; right: 11px; top: 35px; display: flex; flex-direction: column; align-items: center; gap: 12px; }
.cube text { font: bold 15px "Liberation Sans", sans-serif; fill: #aaa; text-anchor: middle; }
.cube .top { font-size: 8px; fill: #3f4148; }
.wcs { width: 48px; height: 18px; gap: 6px; border: 1px solid #a0a0ab; border-radius: 4px; background: #8a8a96; color: #444450; font: 11px/14px "Liberation Sans", sans-serif; }
.navbar { position: absolute; right: 4px; top: 185px; border-radius: 4px; background: #424242; }

.command { display: flex; border-top: 2px solid #707070; border-bottom: 1px solid #999; }
.grip { display: flex; flex-direction: column; align-items: center; gap: 8px; width: 23px; padding-top: 5px; background: linear-gradient(#757575, #444); border-right: 1px solid #888; }
.console { flex: 1; min-width: 0; color: #000; font: 12px/15px "DejaVu Sans Mono", monospace; }
.history { margin: 0; padding: 2px 2px 0; font: inherit; background: #c8c8c8; border-bottom: 1px solid #777; overflow: hidden; }
.prompt { display: flex; align-items: center; height: 23px; padding: 0 5px; gap: 4px; background: #fff; }
.prompt input { flex: 1; margin-left: 2px; font-style: italic; outline: 0; }
.prompt input::placeholder { color: #999; opacity: 1; }

.layouts { display: flex; align-items: flex-start; height: 20px; padding-left: 8px; background: #3a3a3a; }
.layouts button { height: 18px; clip-path: polygon(0 0, 100% 0, 97% 20%, 90% 85%, 86% 100%, 14% 100%, 10% 85%, 3% 20%); background: #555; color: #aaa; }
.layouts .model { width: 66px; background: linear-gradient(#555, #888); color: #fff; font-weight: 700; }
.layouts .layout { width: 54px; }
.layouts .add { width: 26px; }

.status { display: flex; justify-content: flex-end; gap: 2px; height: 27px; padding-right: 2px; background: #454545; }
.cell { display: flex; border: 1px solid #777; background: #505050; color: #fff; }
.coords { width: 211px; justify-content: flex-end; align-items: center; padding-right: 4px; white-space: nowrap; }
.mode { width: 46px; }
.on { display: flex; align-items: center; justify-content: center; width: 22px; height: 22px; background: #5f8fc3; }
.w10 { width: 10px; }
.w12 { width: 12px; }
.w14 { width: 14px; }
.w16 { width: 16px; }
.w22 { width: 22px; }
.w24 { width: 24px; }
.w26 { width: 26px; }
.w28 { width: 28px; }
```
